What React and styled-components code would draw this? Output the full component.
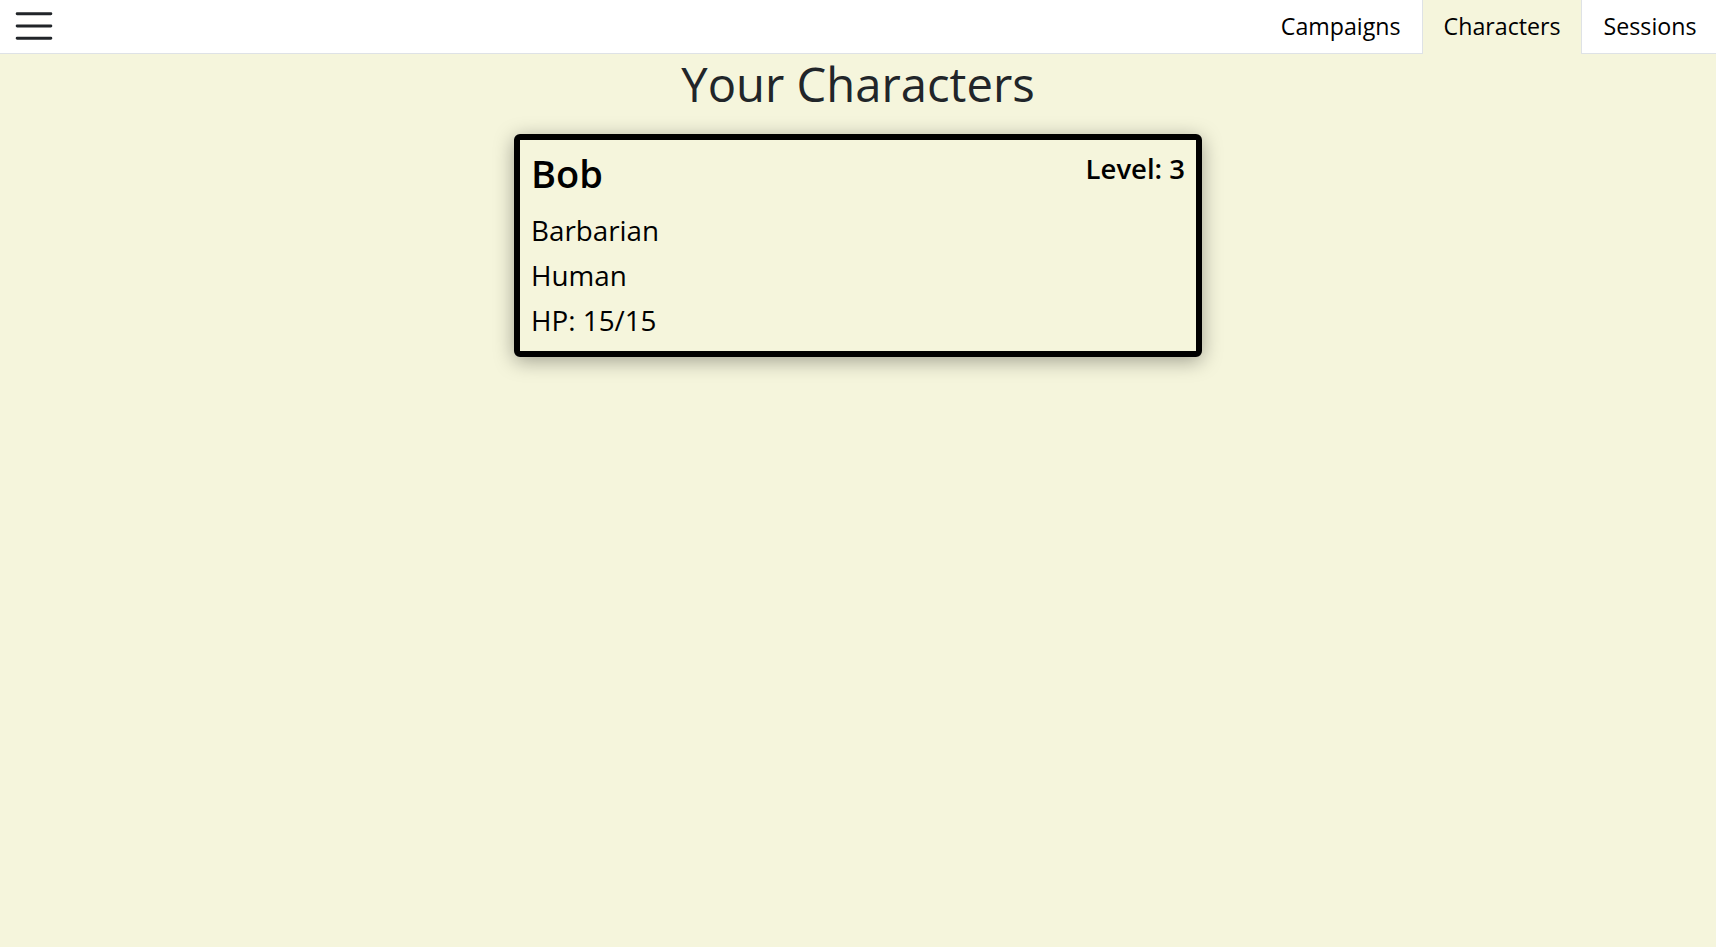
import React from "react";
import styled, { createGlobalStyle } from "styled-components";

const Global = createGlobalStyle`
  html, body { margin: 0; padding: 0; }
  body {
    background: #f5f5dc;
    font-family: "Open Sans", "Noto Sans", sans-serif;
    color: #212529;
    min-height: 100vh;
  }
`;

const Header = styled.header`
  display: flex;
  align-items: stretch;
  justify-content: space-between;
  height: 53px;
  background: #ffffff;
  border-bottom: 1px solid #dee2e6;
`;

const MenuButton = styled.button`
  display: flex;
  align-items: center;
  justify-content: center;
  width: 46px;
  height: 46px;
  margin: 3px 0 0 11px;
  padding: 0;
  border: none;
  background: transparent;
  cursor: pointer;
`;

const Tabs = styled.nav`
  display: flex;
  align-items: stretch;
  margin-right: -2px;
`;

const Tab = styled.a`
  display: flex;
  align-items: center;
  padding: 0 20.5px 2px;
  font-size: 23.2px;
  color: #000;
  text-decoration: none;
  background: ${(p) => (p.$active ? "#f5f5dc" : "#ffffff")};
  border-left: 1px solid ${(p) => (p.$active ? "#dee2e6" : "transparent")};
  border-right: 1px solid ${(p) => (p.$active ? "#dee2e6" : "transparent")};
  margin-bottom: ${(p) => (p.$active ? "-1px" : "0")};
`;

const Main = styled.main`
  display: flex;
  flex-direction: column;
  align-items: center;
  padding-top: 2px;
`;

const Title = styled.h1`
  margin: 0 0 21px;
  font-size: 47.2px;
  font-weight: 500;
  line-height: 1.2;
  color: #212529;
`;

const Card = styled.section`
  box-sizing: border-box;
  width: 688px;
  border: 6px solid #000;
  border-radius: 6px;
  padding: 11px 11px 8px;
  background: #f5f5dc;
  box-shadow: 0 4px 20px rgba(0, 0, 0, 0.35);
  color: #000;
`;

const CardHead = styled.div`
  display: flex;
  justify-content: space-between;
  align-items: flex-start;
  margin-bottom: 12px;
`;

const Name = styled.h2`
  margin: 0;
  font-size: 38px;
  font-weight: 600;
  line-height: 1.2;
`;

const Level = styled.span`
  font-size: 27.5px;
  font-weight: 600;
  line-height: 1.2;
  margin-top: 1px;
`;

const Line = styled.p`
  margin: 0;
  font-size: 27.8px;
  line-height: 45px;
`;

function HamburgerIcon() {
  return (
    <svg width="46" height="46" viewBox="0 0 30 30">
      <path
        d="M4 7h22M4 15h22M4 23h22"
        stroke="#212529"
        strokeWidth="1.9"
        strokeLinecap="round"
        fill="none"
      />
    </svg>
  );
}

export default function App() {
  return (
    <>
      <Global />
      <Header>
        <MenuButton aria-label="menu">
          <HamburgerIcon />
        </MenuButton>
        <Tabs>
          <Tab href="#">Campaigns</Tab>
          <Tab href="#" $active>Characters</Tab>
          <Tab href="#">Sessions</Tab>
        </Tabs>
      </Header>
      <Main>
        <Title>Your Characters</Title>
        <Card>
          <CardHead>
            <Name>Bob</Name>
            <Level>Level: 3</Level>
          </CardHead>
          <Line>Barbarian</Line>
          <Line>Human</Line>
          <Line>HP: 15/15</Line>
        </Card>
      </Main>
    </>
  );
}
